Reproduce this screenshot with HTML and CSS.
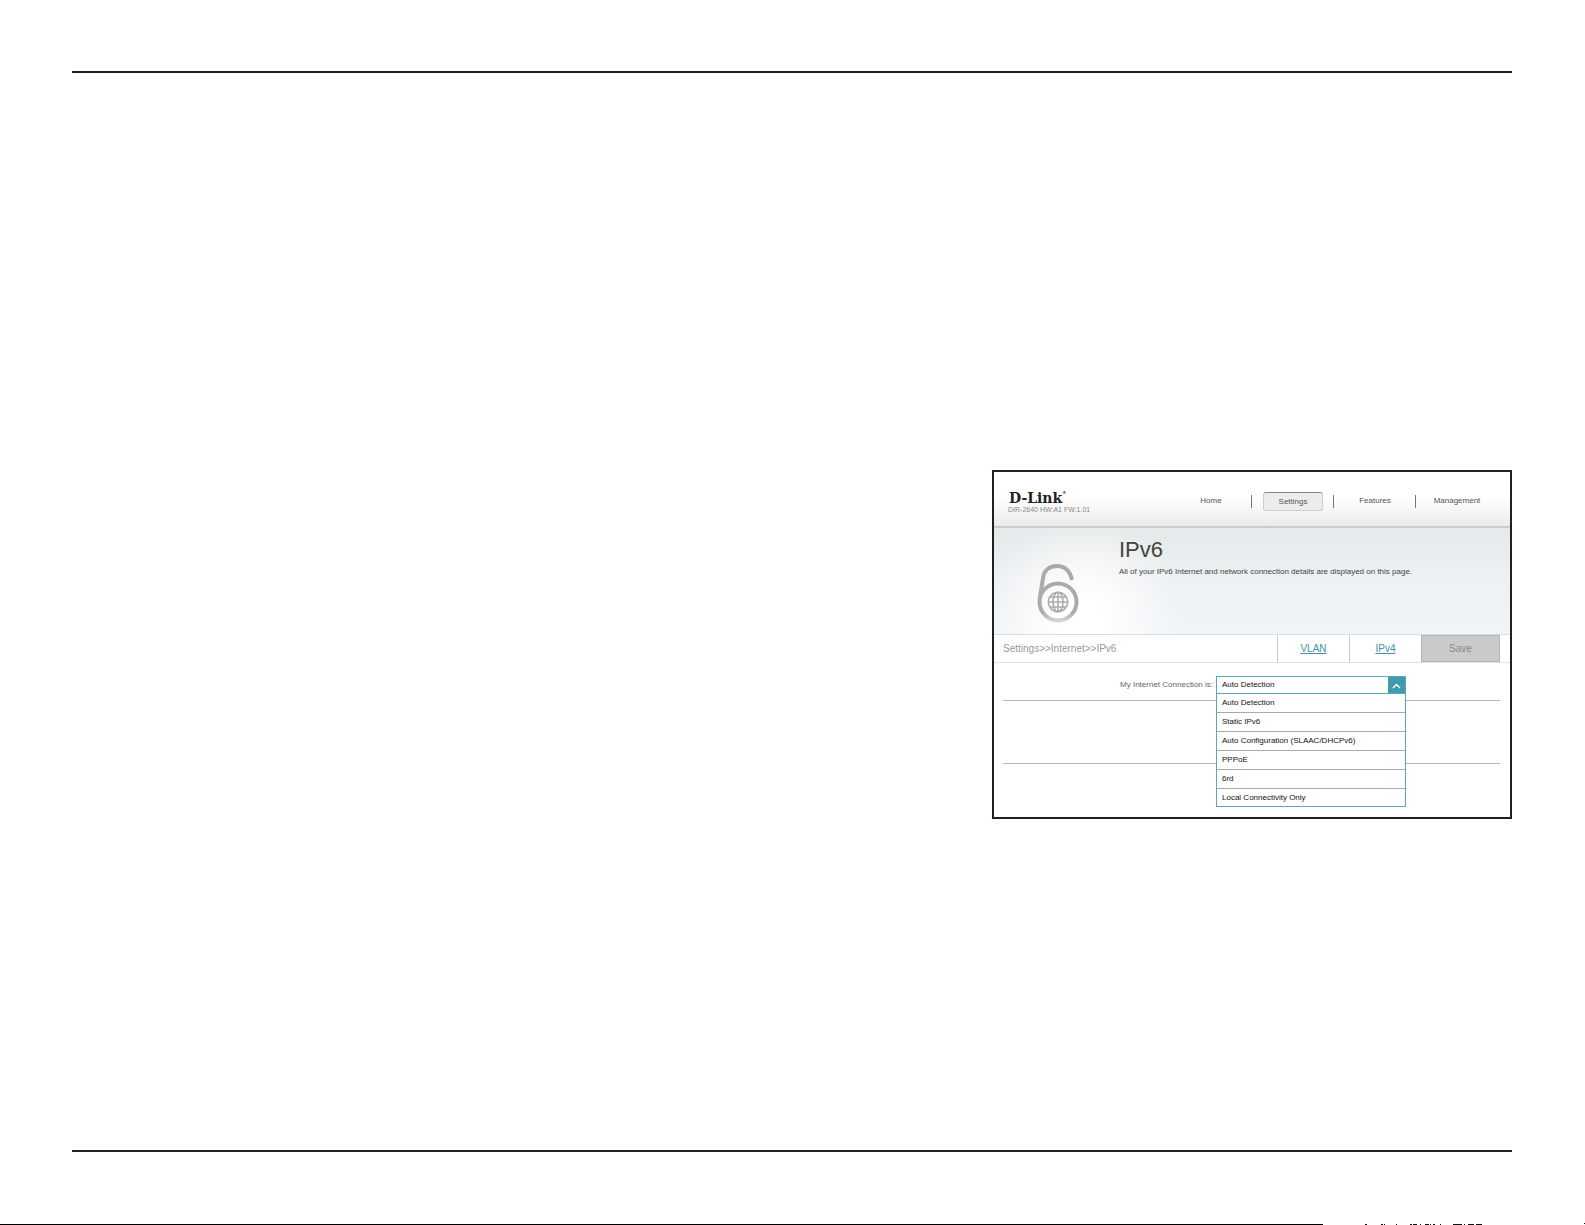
FILE: index.html
```html
<!DOCTYPE html>
<html lang="en">
<head>
<meta charset="utf-8">
<title>IPv6 settings</title>
<link rel="stylesheet" href="styles.css">
</head>
<body>
<main class="sheet">
  <section class="panel">
    <header class="top">
      <div class="brand">
        <div class="logo">D-Link<span class="mark">®</span></div>
        <div class="model">DIR-2640 HW:A1 FW:1.01</div>
      </div>
      <nav class="menu">
        <a href="#home"><span>Home</span></a>
        <a href="#settings"><span class="current">Settings</span></a>
        <a href="#features"><span>Features</span></a>
        <a href="#management"><span>Management</span></a>
      </nav>
    </header>
    <div class="hero">
      <svg class="lock" viewBox="0 0 42 59" fill="none" aria-hidden="true">
        <defs>
          <linearGradient id="fade" gradientUnits="userSpaceOnUse" x1="0" y1="0" x2="0" y2="59">
            <stop offset="0" stop-color="#aaa"/><stop offset=".82" stop-color="#ababab"/><stop offset="1" stop-color="#dedede"/>
          </linearGradient>
        </defs>
        <path d="M3 33 6 14C7 6 12.500 2 20 2c8 0 13 5 15 14" stroke="url(#fade)" stroke-width="4"/>
        <circle cx="21" cy="38" r="18.500" stroke="url(#fade)" stroke-width="4"/>
        <g stroke="#aaa" stroke-width="1.500">
          <circle cx="21" cy="38" r="9.700"/>
          <ellipse cx="21" cy="38" rx="5" ry="9.700"/>
          <path d="M21 28v20M11 38h20M13 33h16M13 43h16"/>
        </g>
      </svg>
      <div class="intro">
        <h1>IPv6</h1>
        <p>All of your IPv6 Internet and network connection details are displayed on this page.</p>
      </div>
    </div>
    <div class="bar">
      <div class="crumbs">Settings&gt;&gt;Internet&gt;&gt;IPv6</div>
      <a class="tab" href="#vlan">VLAN</a>
      <a class="tab" href="#ipv4">IPv4</a>
      <button class="save" type="button">Save</button>
    </div>
    <form class="form">
      <div class="row">
        <label for="connection">My Internet Connection is:</label>
        <div class="picker">
          <select id="connection"><option>Auto Detection</option></select>
          <svg class="arrow" viewBox="0 0 17 17" aria-hidden="true"><path d="M5 11l3.500-3.500L12 11" fill="none" stroke="#fff" stroke-width="1.500"/></svg>
          <ul class="options">
            <li>Auto Detection</li>
            <li>Static IPv6</li>
            <li>Auto Configuration (SLAAC/DHCPv6)</li>
            <li>PPPoE</li>
            <li>6rd</li>
            <li>Local Connectivity Only</li>
          </ul>
        </div>
      </div>
      <div class="block"></div>
      <div class="block last"></div>
    </form>
  </section>
</main>
<footer class="foot">
  <div class="edge">
    <span class="line"></span>
    <svg class="ticks" viewBox="0 0 262 2" aria-hidden="true"><path d="M42 1.500h2M58 1.500h2M61 1.500h1M73 1.500h1M87 1.500h2M90 1.500h4M97 1.500h1M102 1.500h4M107 1.500h1M110 1.500h2M117 1.500h1M130 1.500h9M141 1.500h1M145 1.500h6M153 1.500h6M261 .5h1" stroke="#111" /></svg>
  </div>
</footer>
</body>
</html>
```

FILE: styles.css
```css
* { box-sizing: border-box; }
body {
  margin: 0;
  min-height: 100vh;
  display: flex;
  flex-direction: column;
  background: #fff;
  font: 8px/10px "Liberation Sans", Arial, sans-serif;
  color: #555;
}
.sheet {
  flex: 1;
  margin: 71px 73px 0 72px;
  padding: 397px 0 24px;
  border-top: 2px solid #231f20;
  border-bottom: 2px solid #231f20;
}
.panel {
  width: 520px;
  max-width: 100%;
  margin-left: auto;
  border: 2px solid #231f20;
}
.top {
  display: flex;
  justify-content: space-between;
  height: 56px;
  padding: 0 12px 0 14px;
  background: linear-gradient(#fff 45%, #ebebeb);
  border-bottom: 2px solid #c8cccb;
}
.brand { padding-top: 19px; }
.logo {
  padding-left: 1px;
  font: bold 14px/14px "DejaVu Serif", serif;
  color: #222;
}
.mark { font-size: 4px; line-height: 4px; vertical-align: top; }
.model { font-size: 7px; color: #888; }
.menu {
  display: grid;
  grid-template-columns: repeat(4, 82px);
  padding-top: 20px;
}
.menu a {
  display: flex;
  justify-content: center;
  align-items: center;
  height: 18px;
  color: #555;
  text-decoration: none;
  background: linear-gradient(#777, #777) right center / 1px 13px no-repeat;
}
.menu a:last-child { background: none; }
.current {
  width: 60px;
  height: 19px;
  line-height: 17px;
  text-align: center;
  background: #ececec;
  border: 1px solid #ccc;
  border-top-color: #888;
  border-radius: 3px;
}
.hero {
  display: flex;
  height: 107px;
  border-bottom: 1px solid #d8dede;
  background:
    radial-gradient(ellipse 100px 110px at 88px 96px, #fff 20%, #fff0),
    linear-gradient(#e5e9ea, #edf1f3 50%, #eff4f6);
}
.lock { width: 42px; height: 59px; margin: 36px 40px 0 43px; }
.intro { padding-top: 9px; color: #44443a; }
h1 { margin: 0; font-size: 22px; line-height: 26px; font-weight: normal; }
p { margin: 4px 0 0; line-height: 10px; }
.bar {
  display: flex;
  height: 28px;
  padding: 0 10px 0 9px;
  border-bottom: 1px solid #e2e2e2;
  font-size: 10px;
  line-height: 27px;
}
.crumbs { flex: 1; color: #999; }
.tab {
  width: 72px;
  border-left: 1px solid #ccc;
  text-align: center;
  color: #3f8fa8;
}
.save {
  width: 79px;
  padding: 0;
  border: 1px solid #b4b4b4;
  background: #cacaca;
  color: #888;
  font: inherit;
  line-height: 25px;
}
.form { padding: 13px 10px 0 9px; }
.row {
  display: flex;
  align-items: flex-start;
  height: 25px;
  border-bottom: 1px solid #b5b5b5;
}
.row label {
  width: 210px;
  line-height: 18px;
  text-align: right;
  color: #666;
}
.picker { position: relative; width: 190px; margin-left: 3px; }
select {
  display: block;
  appearance: none;
  width: 100%;
  height: 18px;
  padding: 0 5px;
  border: 1px solid #5aa7b9;
  border-radius: 0;
  background: #fff;
  color: #111;
  font: inherit;
}
.arrow {
  position: absolute;
  top: 1px;
  right: 1px;
  width: 17px;
  height: 17px;
  background: #4199ad;
}
.options {
  position: absolute;
  top: 17px;
  left: 0;
  width: 100%;
  margin: 0;
  padding: 0;
  list-style: none;
  background: #fff;
  border: 1px solid #5aa7b9;
  color: #111;
}
.options li { height: 19px; padding-left: 5px; line-height: 17px; border-bottom: 1px solid #aaa; }
.options li:last-child { border-bottom: 0; height: 17px; }
.block { height: 63px; border-bottom: 1px solid #b5b5b5; }
.last { height: 53px; border-bottom: 0; }
.foot { padding-top: 71px; }
.edge { display: flex; align-items: flex-end; height: 2px; }
.line { flex: 1; height: 1px; background: #000; }
.ticks { width: 262px; height: 2px; }
```
